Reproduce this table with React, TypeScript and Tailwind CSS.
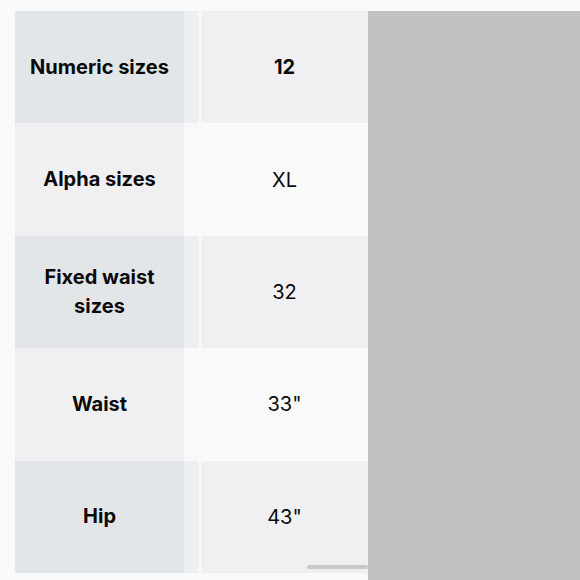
import React from "react";

const rows = [
  { label: "Numeric sizes", value: "12", bold: true },
  { label: "Alpha sizes", value: "XL" },
  { label: "Fixed waist sizes", value: "32" },
  { label: "Waist", value: '33"' },
  { label: "Hip", value: '43"' },
];

export default function App() {
  return (
    <div
      className="w-[580px] h-[580px] bg-[#fafafa] flex pt-[11px] overflow-hidden"
      style={{ fontFamily: "Inter, 'Noto Sans', sans-serif" }}
    >
      {/* Table */}
      <div className="relative w-[368px] pl-[15px] flex flex-col">
        {rows.map((r, i) => {
          const odd = i % 2 === 0;
          return (
            <div key={r.label} className="flex h-[112.4px]">
              <div
                className={`w-[169px] flex items-center justify-center text-center px-[8px] text-[20px] leading-[29px] font-bold text-[#0a0a0a] ${
                  odd ? "bg-[#e3e6e8]" : "bg-[#f0f0f2]"
                }`}
              >
                <span className={r.label === "Fixed waist sizes" ? "px-4" : ""}>
                  {r.label}
                </span>
              </div>
              <div
                className={`w-[15px] ${odd ? "bg-[#eeeff1]" : "bg-[#f9f9f9]"}`}
              />
              <div
                className={`w-[2px] ${odd ? "bg-[#fbfbfb]" : "bg-[#fafafa]"}`}
              />
              <div
                className={`flex-1 flex items-center justify-center text-[20px] text-[#0a0a0a] ${
                  r.bold ? "font-bold" : "font-normal"
                } ${odd ? "bg-[#f0f0f2]" : "bg-[#fafafa]"}`}
              >
                {r.value}
              </div>
            </div>
          );
        })}
        {/* horizontal scrollbar */}
        <div className="absolute left-[307px] right-0 top-[554px] h-[4px] rounded-full bg-[#c8c8c8]" />
      </div>
      {/* Overlay panel */}
      <div className="flex-1 bg-[#c2c2c2]" />
    </div>
  );
}
